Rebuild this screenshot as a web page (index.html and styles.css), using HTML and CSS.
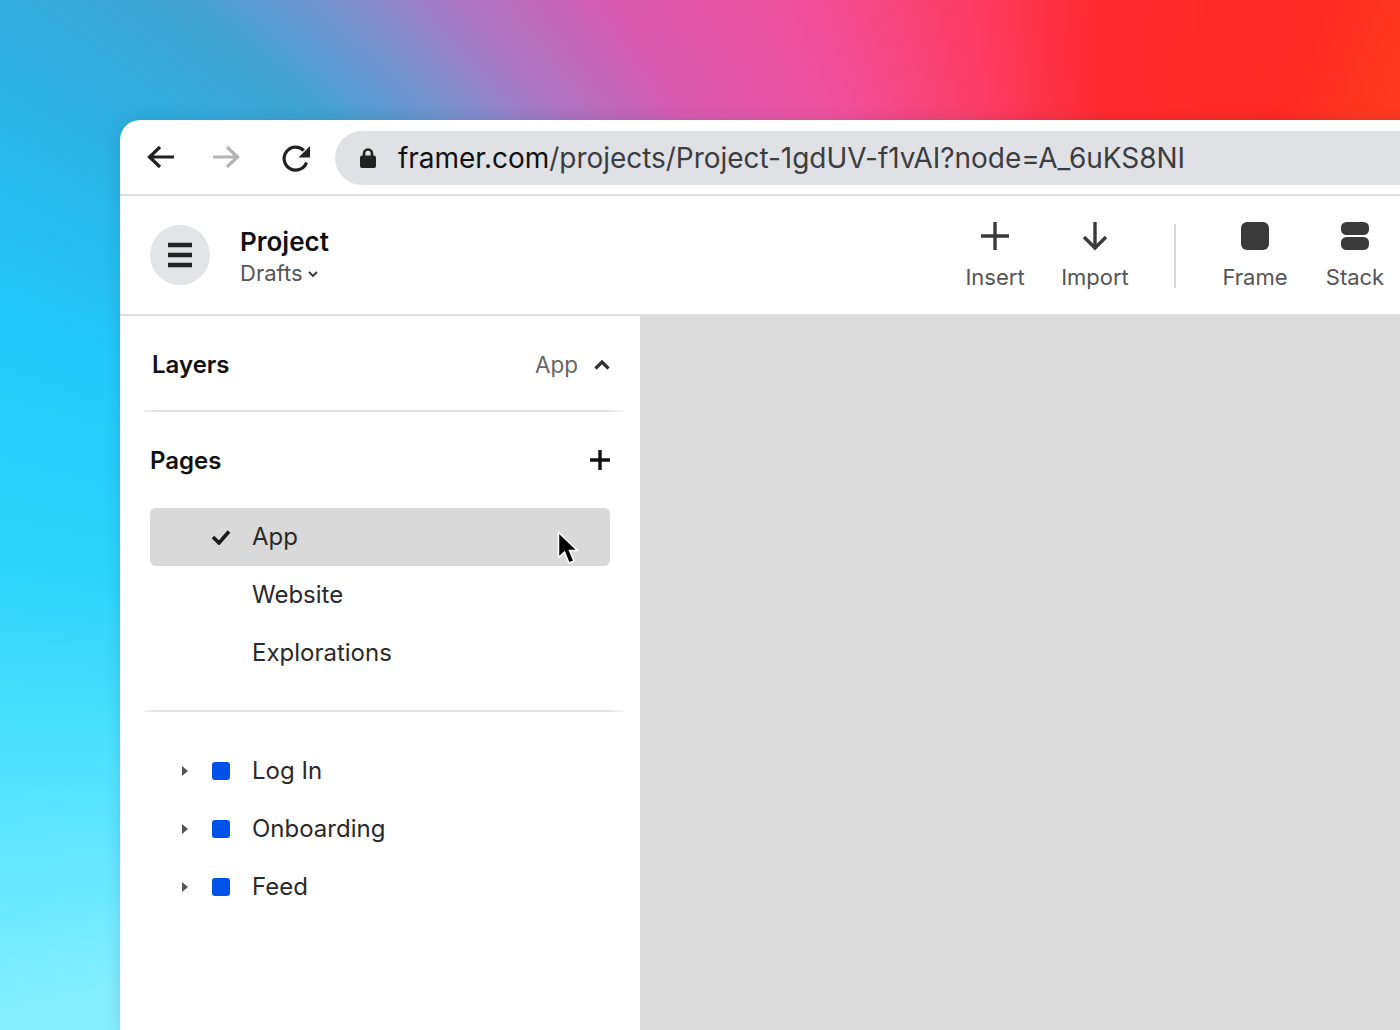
FILE: index.html
```html
<!DOCTYPE html>
<html lang="en">
<head>
<meta charset="utf-8">
<title>Framer project</title>
<link rel="stylesheet" href="styles.css">
</head>
<body>
<main class="window">
  <header class="browser">
    <svg class="nav-icon" viewBox="0 0 30 30"><path d="M28 15H4M14 5L3.500 15 14 25" class="st st-dark"/></svg>
    <svg class="nav-icon nav-fwd" viewBox="0 0 30 30"><path d="M2 15h24M16 5l10.500 10L16 25" class="st st-faint"/></svg>
    <svg class="nav-icon nav-reload" viewBox="0 0 30 30"><path d="M25.500 18.500A11.500 11.500 0 1 1 22.800 6.500" class="st st-dark"/><path d="M29 2v11.500H17.500z" class="fill-dark"/></svg>
    <div class="url">
      <svg class="lock" viewBox="0 0 16 20"><path d="M4 8V5.500a4 4 0 0 1 8 0V8" class="st-lock"/><rect y="7.500" width="16" height="12.500" rx="2" class="fill-dark"/></svg>
      <span class="url-text"><span class="url-host">framer.com</span>/projects/Project-1gdUV-f1vAI?node=A_6uKS8NI</span>
    </div>
  </header>

  <section class="toolbar">
    <button class="menu-btn" aria-label="Menu">
      <svg viewBox="0 0 24 26" class="menu-icon"><path d="M0 3h24M0 13h24M0 23h24"/></svg>
    </button>
    <div class="project">
      <div class="project-name">Project</div>
      <div class="project-folder">Drafts<svg class="chev-small" viewBox="0 0 10 7"><path d="M1 1l4 4 4-4"/></svg></div>
    </div>
    <div class="tools">
      <div class="tool tool-insert">
        <svg viewBox="0 0 30 30"><path d="M15 1v28M1 15h28" class="st-tool"/></svg>
        <span>Insert</span>
      </div>
      <div class="tool tool-import">
        <svg viewBox="0 0 30 30"><path d="M15 1v26M4 16l11 11 11-11" class="st-tool"/></svg>
        <span>Import</span>
      </div>
      <div class="tool-sep"></div>
      <div class="tool tool-frame">
        <svg viewBox="0 0 30 30"><rect x="1" y="1" width="28" height="28" rx="6" class="fill-tool"/></svg>
        <span>Frame</span>
      </div>
      <div class="tool tool-stack">
        <svg viewBox="0 0 30 30"><rect x="1" y="1" width="28" height="13" rx="5.500" class="fill-tool"/><rect x="1" y="16" width="28" height="13" rx="5.500" class="fill-tool"/></svg>
        <span>Stack</span>
      </div>
    </div>
  </section>

  <div class="workspace">
    <aside class="sidebar">
      <div class="layers-head">
        <h2 class="heading heading-layers">Layers</h2>
        <span class="layers-current">App</span>
        <svg class="chev-up" viewBox="0 0 16 10"><path d="M1.500 8.500L8 2l6.500 6.500"/></svg>
      </div>
      <div class="divider"></div>
      <div class="pages-head">
        <h2 class="heading">Pages</h2>
        <svg class="plus" viewBox="0 0 20 20"><path d="M10 0v20M0 10h20"/></svg>
      </div>
      <ul class="rows">
        <li class="row row-active">
          <svg class="check" viewBox="0 0 20 16"><path d="M2 8l6 6L18 2.500"/></svg>
          <span>App</span>
        </li>
        <li class="row"><span>Website</span></li>
        <li class="row"><span>Explorations</span></li>
      </ul>
      <div class="divider divider-2"></div>
      <ul class="rows rows-layers">
        <li class="row"><i class="tri"></i><i class="swatch"></i><span>Log In</span></li>
        <li class="row"><i class="tri"></i><i class="swatch"></i><span>Onboarding</span></li>
        <li class="row"><i class="tri"></i><i class="swatch"></i><span>Feed</span></li>
      </ul>
      <svg class="cursor" viewBox="0 0 22 34"><path d="M1.500 1.500v25l6-5.500 4.500 11 5-2-4.500-10.500h8z"/></svg>
    </aside>
    <div class="canvas"></div>
  </div>
</main>
</body>
</html>
```
FILE: styles.css
```css
* { box-sizing: border-box; }
html, body { margin: 0; height: 100%; overflow: hidden; }
body {
  padding: 120px 0 0 120px;
  font-family: Inter, "Liberation Sans", sans-serif;
  background: conic-gradient(from 0deg at 1100px 750px,
    #ff2a30 0deg, #ff2a22 16deg, #ff3a20 24deg, #ff3a20 60deg,
    #84eeff 180deg, #84eeff 256deg, #58e4ff 267deg, #2cd4fa 280deg, #22c8f8 292deg,
    #2cb0e2 302deg, #40a4d4 309deg, #7a90cc 314.600deg, #a878c4 319deg,
    #d95aae 327deg, #ee52a0 336.500deg, #fa4070 347.700deg, #ff2a30 360deg);
}
.window {
  width: 1280px;
  height: 910px;
  background: #fff;
  border-top-left-radius: 20px;
  overflow: hidden;
  display: flex;
  flex-direction: column;
  box-shadow: 0 0 16px rgba(0, 50, 70, .14);
}

.browser {
  height: 76px;
  flex: none;
  display: flex;
  align-items: center;
  padding: 0 0 0 26px;
  border-bottom: 2px solid #dedede;
}
.nav-icon { width: 30px; height: 30px; flex: none; }
.nav-fwd { margin-left: 35px; }
.nav-reload { margin-left: 40px; margin-top: 3px; }
.st { fill: none; stroke-width: 3.200px; }
.st-dark { stroke: #222; }
.st-faint { stroke: #b5b5b5; }
.fill-dark { fill: #222; }
.st-lock { fill: none; stroke: #222; stroke-width: 2.600px; }
.url {
  margin-left: 24px;
  margin-top: 2px;
  flex: 1;
  height: 54px;
  background: #e0e1e5;
  border-radius: 27px 0 0 27px;
  display: flex;
  align-items: center;
  padding-left: 25px;
  white-space: nowrap;
}
.lock { width: 16px; height: 20px; flex: none; }
.url-text { margin-left: 22px; font-size: 28px; letter-spacing: -.04px; color: #3c3d40; }
.url-host { color: #111; }

.toolbar {
  height: 120px;
  flex: none;
  display: flex;
  align-items: center;
  padding-left: 30px;
  border-bottom: 2px solid #dedede;
}
.menu-btn {
  width: 60px;
  height: 60px;
  border: 0;
  padding: 0;
  border-radius: 50%;
  background: #e3e4e7;
  display: flex;
  align-items: center;
  justify-content: center;
  flex: none;
}
.menu-icon { width: 24px; height: 26px; }
.menu-icon path { fill: none; stroke: #222; stroke-width: 4.400px; stroke-linecap: round; }
.project { margin-left: 30px; margin-top: 4px; }
.project-name { font-size: 26px; font-weight: 600; line-height: 32px; color: #111; }
.project-folder { font-size: 22px; line-height: 30px; color: #555; display: flex; align-items: center; }
.chev-small { width: 10px; height: 7px; margin-left: 5px; margin-top: 2px; }
.chev-small path { fill: none; stroke: #333; stroke-width: 1.800px; }

.tools { margin-left: auto; display: flex; align-items: flex-start; height: 80px; margin-top: 12px; }
.tool { display: flex; flex-direction: column; align-items: center; width: 100px; }
.tool svg { width: 30px; height: 30px; }
.tool span { margin-top: 12px; font-size: 22px; line-height: 28px; color: #555; white-space: nowrap; }
.tool-sep { width: 2px; height: 64px; background: #d8d8d8; margin: 3px 29px 0 29px; }
.tool-stack { margin-right: -5px; }
.st-tool { fill: none; stroke: #3a3a3a; stroke-width: 3.400px; }
.fill-tool { fill: #3a3a3a; }

.workspace { flex: 1; display: flex; min-height: 0; }
.sidebar { width: 520px; flex: none; padding: 0 30px; position: relative; }
.canvas { flex: 1; background: #dbdbdb; }

.layers-head { height: 94px; display: flex; align-items: flex-start; padding: 33px 0 0 2px; }
.heading { margin: 0; font-size: 24px; line-height: 32px; font-weight: 600; color: #111; }
.heading-layers { flex: 1; }
.layers-current { font-size: 22.500px; line-height: 32px; color: #666; }
.chev-up { width: 16px; height: 10px; margin: 11px 0 0 16px; }
.chev-up path { fill: none; stroke: #333; stroke-width: 3.200px; }
.divider {
  height: 2px;
  margin: 0 -15px 0 -6px;
  background: linear-gradient(90deg, #f4f4f4, #e0e0e0 12px, #e0e0e0 calc(100% - 20px), #fafafa);
}
.pages-head { height: 96px; display: flex; align-items: flex-start; justify-content: space-between; padding-top: 33px; }
.plus { width: 20px; height: 20px; margin-top: 5px; }
.plus path { fill: none; stroke: #111; stroke-width: 3.400px; }
.rows { list-style: none; margin: 0; padding: 0; }
.row {
  height: 58px;
  display: flex;
  align-items: center;
  padding: 0 0 2px 102px;
  font-size: 24px;
  color: #2a2a2a;
  position: relative;
}
.row-active { background: #d9d9d9; border-radius: 6px; }
.check { position: absolute; left: 61px; top: 21px; width: 20px; height: 16px; }
.check path { fill: none; stroke: #1c1c1c; stroke-width: 3.600px; }
.divider-2 { margin-top: 28px; }
.rows-layers { margin-top: 30px; }
.tri {
  position: absolute;
  left: 32px;
  top: 24px;
  border-left: 6px solid #555;
  border-top: 5px solid transparent;
  border-bottom: 5px solid transparent;
}
.swatch {
  position: absolute;
  left: 62px;
  top: 20px;
  width: 18px;
  height: 18px;
  border-radius: 3px;
  background: #0052e8;
}
.cursor { position: absolute; left: 437px; top: 215px; width: 22px; height: 34px; }
.cursor path { fill: #000; stroke: #fff; stroke-width: 1.500px; }
```
